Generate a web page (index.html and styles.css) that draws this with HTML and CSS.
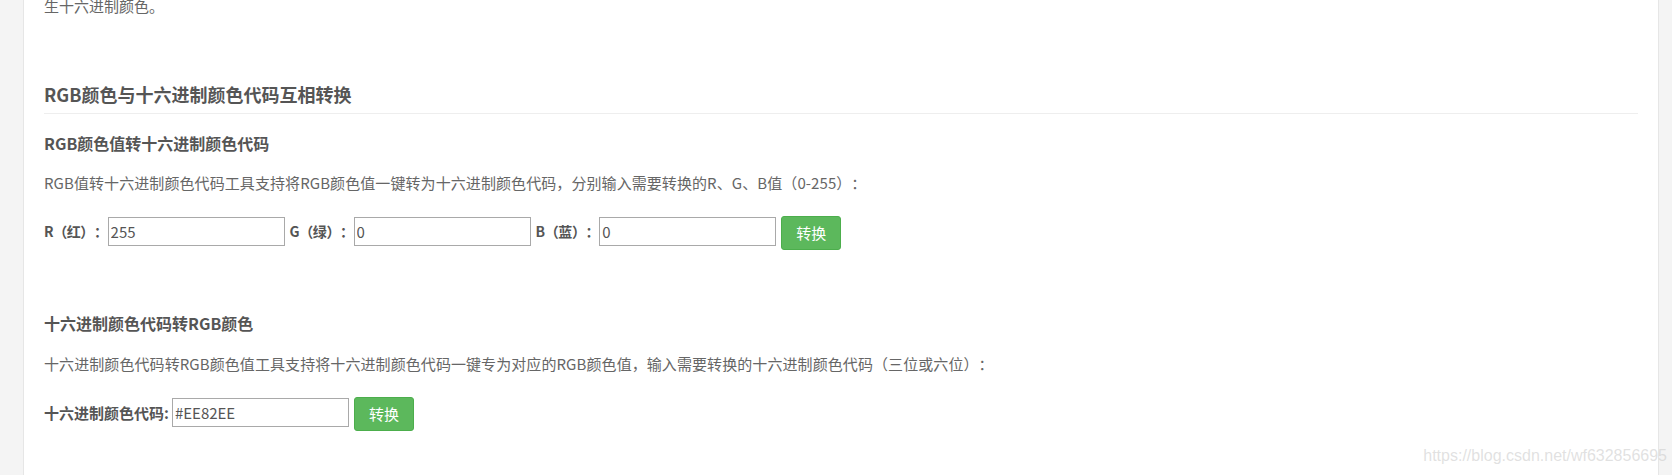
FILE: index.html
```html
<!DOCTYPE html>
<html lang="zh-CN">
<head>
  <meta charset="UTF-8" />
  <meta name="viewport" content="width=device-width, initial-scale=1.0" />
  <title>RGB颜色与十六进制颜色代码互相转换</title>
  <link rel="stylesheet" href="styles.css">
</head>
<body>

  <div class="page">
    <p class="intro">生十六进制颜色。</p>

    <h2 class="section-title">RGB颜色与十六进制颜色代码互相转换</h2>

    <h3 class="tool-title">RGB颜色值转十六进制颜色代码</h3>
    <p class="tool-desc">RGB值转十六进制颜色代码工具支持将RGB颜色值一键转为十六进制颜色代码，分别输入需要转换的R、G、B值（0-255）：</p>
    <div class="tool-form">
      <label class="field-label">R（红）：</label>
      <input class="field-input" type="text" value="255">
      <label class="field-label">G（绿）：</label>
      <input class="field-input" type="text" value="0">
      <label class="field-label">B（蓝）：</label>
      <input class="field-input" type="text" value="0">
      <button class="btn-convert" type="button">转换</button>
    </div>

    <h3 class="tool-title second">十六进制颜色代码转RGB颜色</h3>
    <p class="tool-desc">十六进制颜色代码转RGB颜色值工具支持将十六进制颜色代码一键专为对应的RGB颜色值，输入需要转换的十六进制颜色代码（三位或六位）：</p>
    <div class="tool-form">
      <label class="field-label hex">十六进制颜色代码:</label>
      <input class="field-input" type="text" value="#EE82EE">
      <button class="btn-convert" type="button">转换</button>
    </div>
  </div>

  <div class="watermark">https://blog.csdn.net/wf632856695</div>

</body>
</html>
```

FILE: styles.css
```css
body {
  margin: 0;
  background: #f4f4f4;
  font-family: "Microsoft YaHei", "Noto Sans CJK SC", sans-serif;
  color: #555;
  position: relative;
  height: 475px;
  overflow: hidden;
  text-spacing-trim: space-all; /* full-width punctuation is not squeezed */
}

.page {
  margin-left: 23px;
  width: 1636px;
  min-height: 475px;
  box-sizing: border-box;
  padding: 0 20px;
  background: #fff;
  border-left: 1px solid #e6e6e6;
  border-right: 1px solid #e6e6e6;
  display: flow-root;
}

.intro {
  margin: -6px 0 0;
  font-size: 15px;
  line-height: 24px;
  color: #666;
}

.section-title {
  margin: 63px 0 0;
  font-size: 18px;
  line-height: 26px;
  padding-bottom: 6px;
  border-bottom: 1px solid #eee;
}

.tool-title {
  margin: 17px 0 0;
  font-size: 16px;
  line-height: 24px;
}

.tool-title.second {
  margin-top: 61px;
}

.tool-desc {
  margin: 16px 0 0;
  font-size: 15px;
  line-height: 24px;
  color: #666;
  letter-spacing: 0.08px;
}

.tool-title.second + .tool-desc {
  margin-top: 17px;
}

.tool-form {
  display: flex;
  align-items: flex-start;
  margin-top: 21px;
}

.field-label {
  font-size: 14px;
  font-weight: bold;
  line-height: 29px;
  margin-top: 1px;
  letter-spacing: -0.4px;
  white-space: nowrap;
}

.field-label.hex {
  font-size: 15px;
  letter-spacing: 0;
  margin-right: 3px;
}

/* space between an input and the next label */
.field-input + .field-label {
  margin-left: 5px;
}

.field-input {
  width: 177px;
  height: 29px;
  box-sizing: border-box;
  margin: 1px 0 0;
  padding: 0 2px;
  border: 1px solid #a9a9a9;
  font-family: inherit;
  font-size: 15px;
  color: #555;
  background: #fff;
}

.btn-convert {
  margin-left: 5px;
  padding: 6px 14px;
  font-family: inherit;
  font-size: 15px;
  line-height: 20px;
  color: #fff;
  background: #5cb85c;
  border: 1px solid #4cae4c;
  border-radius: 3px;
}

.watermark {
  position: absolute;
  right: 5px;
  top: 446px;
  font-family: "Liberation Sans", Arial, sans-serif;
  font-size: 16px;
  line-height: 20px;
  color: rgba(200, 200, 200, 0.55);
  pointer-events: none;
}
```
